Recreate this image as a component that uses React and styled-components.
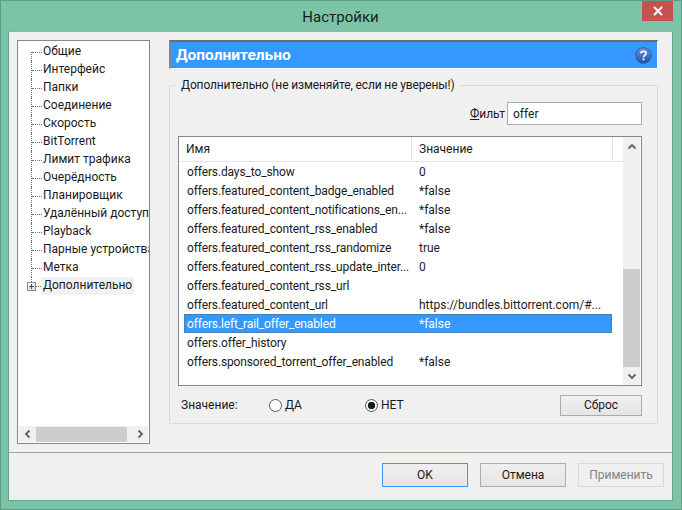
import styled, { createGlobalStyle } from "styled-components";

const GlobalStyle = createGlobalStyle`
  html, body {
    margin: 0;
    padding: 0;
    background: #7bc4a8;
  }
  * { box-sizing: border-box; }
`;

const treeItems = [
  "Общие", "Интерфейс", "Папки", "Соединение", "Скорость", "BitTorrent", "Лимит трафика",
  "Очерёдность", "Планировщик", "Удалённый доступ", "Playback", "Парные устройства", "Метка",
];

const rows = [
  ["offers.days_to_show", "0"],
  ["offers.featured_content_badge_enabled", "*false"],
  ["offers.featured_content_notifications_en...", "*false"],
  ["offers.featured_content_rss_enabled", "*false"],
  ["offers.featured_content_rss_randomize", "true"],
  ["offers.featured_content_rss_update_inter...", "0"],
  ["offers.featured_content_rss_url", ""],
  ["offers.featured_content_url", "https://bundles.bittorrent.com/#..."],
  ["offers.left_rail_offer_enabled", "*false"],
  ["offers.offer_history", ""],
  ["offers.sponsored_torrent_offer_enabled", "*false"],
];

const Chevron = ({ dir }) => {
  const paths = {
    left: "M5.5 1.5 L2 5 L5.5 8.5",
    right: "M2.5 1.5 L6 5 L2.5 8.5",
    up: "M1.5 5.5 L5 2 L8.5 5.5",
    down: "M1.5 2.5 L5 6 L8.5 2.5",
  };
  const wide = dir === "up" || dir === "down";
  return (
    <svg width={wide ? 10 : 8} height={wide ? 8 : 10} viewBox={wide ? "0 0 10 8" : "0 0 8 10"}>
      <path d={paths[dir]} fill="none" stroke="#606060" strokeWidth="1.8" />
    </svg>
  );
};

const HelpIcon = () => (
  <svg width="17" height="17" viewBox="0 0 17 17">
    <defs>
      <linearGradient id="helpFill" x1="0" y1="0" x2="0" y2="1">
        <stop offset="0" stopColor="#6f97d8" />
        <stop offset="1" stopColor="#1f4fa8" />
      </linearGradient>
    </defs>
    <circle cx="8.5" cy="8.5" r="7.8" fill="url(#helpFill)" stroke="#2a5aa8" />
    <path d="M5.9 6.4 C5.9 3.7 11.1 3.7 11.1 6.4 C11.1 8.3 8.5 8.2 8.5 10.2" fill="none" stroke="#fff" strokeWidth="1.6" />
    <rect x="7.6" y="11.4" width="1.8" height="1.9" fill="#fff" />
  </svg>
);

const App = () => {
  return (
    <Frame>
      <GlobalStyle />
      <TitleBar>
        <Title>Настройки</Title>
        <CloseButton>
          <svg width="10" height="10" viewBox="0 0 10 10">
            <path d="M1 1 L9 9 M9 1 L1 9" stroke="#fff" strokeWidth="2" />
          </svg>
        </CloseButton>
      </TitleBar>
      <Client>
        <Main>
          <Tree>
            <TreeList>
              {treeItems.map((item) => (
                <TreeRow key={item}>
                  <TreeTick />
                  <TreeLabel>{item}</TreeLabel>
                </TreeRow>
              ))}
              <TreeRow $last>
                <Expander />
                <TreeTick $short />
                <TreeLabel $active>Дополнительно</TreeLabel>
              </TreeRow>
            </TreeList>
            <HScroll>
              <ScrollBtn><Chevron dir="left" /></ScrollBtn>
              <HThumb />
              <ScrollBtn><Chevron dir="right" /></ScrollBtn>
            </HScroll>
          </Tree>
          <Panel>
            <PanelHeader>
              <PanelTitle>Дополнительно</PanelTitle>
              <HelpIcon />
            </PanelHeader>
            <Group>
              <GroupLegend>Дополнительно (не изменяйте, если не уверены!)</GroupLegend>
              <FilterRow>
                <FilterLabel><u>Ф</u>ильт</FilterLabel>
                <FilterInput defaultValue="offer" />
              </FilterRow>
              <ListBox>
                <ListBody>
                  <ListHead>
                    <HeadName>Имя</HeadName>
                    <HeadValue>Значение</HeadValue>
                    <HeadRest />
                  </ListHead>
                  {rows.map(([name, value]) => {
                    const selected = name === "offers.left_rail_offer_enabled";
                    return (
                      <Row key={name} $selected={selected}>
                        <NameCell>{name}</NameCell>
                        <ValueCell>{value}</ValueCell>
                      </Row>
                    );
                  })}
                </ListBody>
                <VScroll>
                  <VBtn><Chevron dir="up" /></VBtn>
                  <VTrack><VThumb /></VTrack>
                  <VBtn $small><Chevron dir="down" /></VBtn>
                </VScroll>
              </ListBox>
              <ValueRow>
                <ValueLabel>Значение:</ValueLabel>
                <RadioLabel $width={96}><Radio />ДА</RadioLabel>
                <RadioLabel $width={189}><Radio $checked />НЕТ</RadioLabel>
                <ResetButton>Сброс</ResetButton>
              </ValueRow>
            </Group>
          </Panel>
        </Main>
        <Footer>
          <FooterButton $primary>OK</FooterButton>
          <FooterButton>Отмена</FooterButton>
          <FooterButton disabled>Применить</FooterButton>
        </Footer>
      </Client>
    </Frame>
  );
};

const Frame = styled.div`
  width: 682px;
  height: 510px;
  display: flex;
  flex-direction: column;
  padding: 0 8px 8px 7px;
  background: #7bc4a8;
  border: 1px solid #5f9c86;
  font-family: Roboto, "Open Sans", sans-serif;
  font-size: 12px;
  color: #1a1a1a;
  overflow: hidden;
`;

const TitleBar = styled.div`
  position: relative;
  height: 30px;
  flex-shrink: 0;
  display: flex;
  align-items: center;
  justify-content: center;
`;

const Title = styled.div`
  font-size: 15px;
  color: #1c1c1c;
  margin-top: 1px;
`;

const CloseButton = styled.div`
  position: absolute;
  top: 0;
  right: 0;
  width: 31px;
  height: 20px;
  background: #c75050;
  display: flex;
  align-items: center;
  justify-content: center;
`;

const Client = styled.div`
  flex: 1;
  display: flex;
  flex-direction: column;
  background: #f0f0f0;
  border: 1px solid #63a58c;
  border-top-color: #8fb5a6;
`;

const Main = styled.div`
  height: 421px;
  flex-shrink: 0;
  display: flex;
  gap: 19px;
  padding: 8px 14px 0 8px;
  border-bottom: 1px solid #a0a0a0;
`;

const Tree = styled.div`
  width: 133px;
  height: 404px;
  flex-shrink: 0;
  display: flex;
  flex-direction: column;
  justify-content: space-between;
  background: #fff;
  border: 1px solid #828790;
  padding: 1px;
  overflow: hidden;
`;

const TreeList = styled.div`
  padding-top: 1px;
`;

const TreeRow = styled.div`
  position: relative;
  height: 18px;
  display: flex;
  align-items: center;
  padding-left: 12px;
  white-space: nowrap;

  &::before {
    content: "";
    position: absolute;
    left: 12px;
    top: 0;
    height: ${(p) => (p.$last ? "5px" : "18px")};
    border-left: 1px dotted #707070;
  }

  &:first-child::before {
    top: 9px;
    height: 9px;
  }
`;

const TreeTick = styled.span`
  width: ${(p) => (p.$short ? "5px" : "10px")};
  margin-left: ${(p) => (p.$short ? "0" : "1px")};
  margin-right: ${(p) => (p.$short ? "0" : "1px")};
  border-top: 1px dotted #707070;
  flex-shrink: 0;
`;

const Expander = styled.span`
  position: relative;
  z-index: 1;
  width: 9px;
  height: 9px;
  margin-left: -4px;
  flex-shrink: 0;
  border: 1px solid #8c8c8c;
  background:
    linear-gradient(#2b4f9e, #2b4f9e) center / 5px 1px no-repeat,
    linear-gradient(#2b4f9e, #2b4f9e) center / 1px 5px no-repeat,
    linear-gradient(#fff, #dcdcdc);
`;

const TreeLabel = styled.span`
  height: 18px;
  line-height: 17px;
  padding: ${(p) => (p.$active ? "0 2px" : "0")};
  background: ${(p) => (p.$active ? "#eef1f5" : "transparent")};
`;

const HScroll = styled.div`
  height: 16px;
  flex-shrink: 0;
  display: flex;
  align-items: center;
  background: #f0f0f0;
`;

const ScrollBtn = styled.div`
  width: 17px;
  height: 16px;
  flex-shrink: 0;
  display: flex;
  align-items: center;
  justify-content: center;
`;

const HThumb = styled.div`
  width: 91px;
  height: 15px;
  background: #cdcdcd;
  margin-right: auto;
`;

const Panel = styled.div`
  width: 489px;
  flex-shrink: 0;
  display: flex;
  flex-direction: column;
`;

const PanelHeader = styled.div`
  height: 29px;
  display: flex;
  align-items: center;
  justify-content: space-between;
  padding: 0 5px 0 5px;
  background: #3399ff;
  border-top: 2px solid #6b6b6b;
  border-left: 2px solid #7a8a9a;
  border-right: 1px solid #fff;
  border-bottom: 1px solid #fff;
`;

const PanelTitle = styled.div`
  font-size: 15.5px;
  font-weight: 700;
  color: #fff;
`;

const Group = styled.fieldset`
  margin: 8px 0 0;
  padding: 0 15px 8px 8px;
  height: 347px;
  border: 1px solid #dcdcdc;
  min-width: 0;
`;

const GroupLegend = styled.legend`
  margin-left: -2px;
  padding: 0 4px 0 5px;
  line-height: 17px;
  letter-spacing: -0.13px;
`;

const FilterRow = styled.div`
  height: 23px;
  margin-top: 8px;
  display: flex;
  justify-content: flex-end;
  align-items: center;
`;

const FilterLabel = styled.label`
  margin-right: 2px;
`;

const FilterInput = styled.input`
  width: 135px;
  height: 23px;
  padding: 0 5px;
  border: 1px solid #ababab;
  background: #fff;
  font: inherit;
  font-size: 12px;
  color: #1a1a1a;
  outline: none;
`;

const ListBox = styled.div`
  height: 250px;
  margin-top: 11px;
  display: flex;
  background: #fff;
  border: 1px solid #828790;
`;

const ListBody = styled.div`
  width: 444px;
  padding-left: 5px;
`;

const ListHead = styled.div`
  height: 25px;
  display: grid;
  grid-template-columns: 228px 201px 1fr;
  margin-left: -5px;
  padding-left: 5px;
  border-bottom: 1px solid #e5e5e5;
`;

const HeadName = styled.div`
  padding-left: 2px;
  line-height: 25px;
  border-right: 1px solid #e5e5e5;
`;

const HeadValue = styled.div`
  padding-left: 7px;
  line-height: 25px;
  border-right: 1px solid #e5e5e5;
`;

const HeadRest = styled.div``;

const Row = styled.div`
  width: 428px;
  height: 19px;
  display: grid;
  grid-template-columns: 228px 1fr;
  align-items: center;
  line-height: 19px;
  white-space: nowrap;
  background: ${(p) => (p.$selected ? "#3399ff" : "transparent")};
  color: ${(p) => (p.$selected ? "#fff" : "#1a1a1a")};
  box-shadow: ${(p) => (p.$selected ? "inset 0 0 0 1px #4a7fb5" : "none")};
`;

const NameCell = styled.div`
  height: 19px;
  padding: 1px 0 0 3px;
  letter-spacing: -0.13px;
  overflow: hidden;
`;

const ValueCell = styled.div`
  height: 19px;
  padding: 1px 0 0 7px;
  overflow: hidden;
`;

const VScroll = styled.div`
  width: 17px;
  display: flex;
  flex-direction: column;
  background: #f0f0f0;
  margin: 0 1px 0 auto;
`;

const VBtn = styled.div`
  height: ${(p) => (p.$small ? "18px" : "20px")};
  flex-shrink: 0;
  display: flex;
  align-items: center;
  justify-content: center;
`;

const VTrack = styled.div`
  flex: 1;
  display: flex;
  flex-direction: column;
  justify-content: flex-end;
`;

const VThumb = styled.div`
  height: 98px;
  background: #cdcdcd;
`;

const ValueRow = styled.div`
  height: 22px;
  margin-top: 8px;
  display: flex;
  align-items: center;
  padding-left: 3px;
`;

const ValueLabel = styled.div`
  width: 88px;
  flex-shrink: 0;
`;

const RadioLabel = styled.label`
  width: ${(p) => p.$width}px;
  flex-shrink: 0;
  display: flex;
  align-items: center;
  gap: 3px;
`;

const Radio = styled.span`
  width: 13px;
  height: 13px;
  border-radius: 50%;
  border: 1px solid #5a5a5a;
  background: ${(p) =>
    p.$checked
      ? "radial-gradient(circle, #1a1a1a 0 3.4px, #f4f4f4 4px)"
      : "#fff"};
`;

const buttonFace = `
  border: 1px solid #acacac;
  background: linear-gradient(#f0f0f0, #e5e5e5);
  font: inherit;
  font-size: 12px;
  color: #1a1a1a;
  padding: 0;
`;

const ResetButton = styled.button`
  ${buttonFace}
  width: 82px;
  height: 21px;
  margin-left: auto;
`;

const Footer = styled.div`
  flex: 1;
  display: flex;
  justify-content: flex-end;
  gap: 12px;
  padding: 10px 8px 0 0;
`;

const FooterButton = styled.button`
  ${buttonFace}
  width: 86px;
  height: 24px;
  border-color: ${(p) => (p.$primary ? "#3399ff" : "#acacac")};

  &:disabled {
    color: #838383;
    border-color: #d9d9d9;
    background: #efefef;
  }
`;

export default App;
